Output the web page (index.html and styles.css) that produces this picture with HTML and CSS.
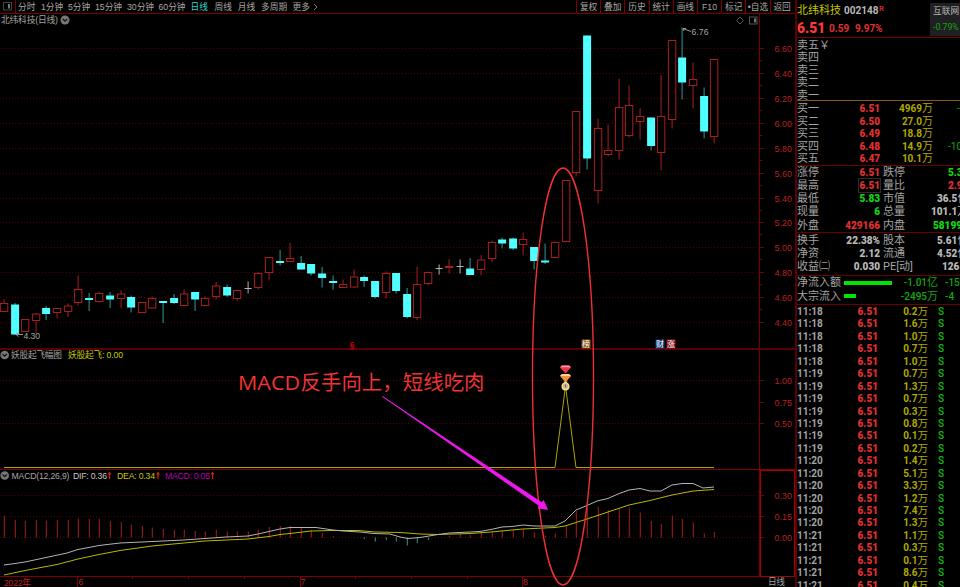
FILE: index.html
```html
<!DOCTYPE html>
<html lang="zh-CN">
<head>
<meta charset="utf-8">
<title>北纬科技 002148</title>
<link rel="stylesheet" href="styles.css">
</head>
<body>
<div class="app">
  <main class="left">
    <nav class="bar">
      <span class="dock"><svg width="9" height="9" viewBox="0 0 9 9"><rect x=".5" y=".5" width="8" height="7.5" fill="none" stroke="#444"/><rect x="5" y="2" width="2" height="4.5" fill="#777"/></svg></span>
      <div class="periods">
        <span class="p2">分时</span><span class="p3">1分钟</span><span class="p3">5分钟</span><span class="p4">15分钟</span><span class="p4b">30分钟</span><span class="p4">60分钟</span><span class="p2b on">日线</span><span class="p2c">周线</span><span class="p2c">月线</span><span class="p4b">多周期</span><span>更多<svg class="chev" width="5" height="8" viewBox="0 0 5 8"><path d="M1 1l3 3-3 3" fill="none" stroke="#999" stroke-width=".8"/></svg></span>
      </div>
      <div class="tools"><span>复权</span><span>叠加</span><span>历史</span><span>统计</span><span>画线</span><span>F10</span><span>标记</span><span>•自选</span><span>返回</span></div>
    </nav>
    <svg class="chart" width="795" height="573" viewBox="0 14 795 573">
      <g id="grid"></g>
      <g class="frame">
        <path d="M759.5 14V577"/>
        <path class="thick" d="M0 349H795"/>
        <path class="bright" d="M0 469.5H795M0 576.5H795"/>
        <path d="M77.5 577V587M300.5 577V587M522.5 577V587M132.5 577v2M188.5 577v2M244.5 577v2M355.5 577v2M411.5 577v2M467.5 577v2"/>
      </g>
      <rect class="axisbox" x="760.5" y="470.5" width="34" height="106"/>
      <g id="candles"></g>
      <g id="macd"></g>
      <polyline class="dea" points="4,575 25,570.5 57,564.5 78,559 99,554.5 120,550.5 152,546 184,543 205,541 248,539 269,536.5 280,534.5 290,533.5 311,531 333,530.5 358,530.5 375,532 400,532.5 420,534 438,534.5 470,533.5 491,532 512,530 523,529 544,528 555,527.5 565,526 587,519 608,512 629,505 650,500.5 672,495 693,491 714,489.5"/>
      <polyline class="dif" points="4,565 15,563.5 25,562 46,557.5 67,553 78,549.5 99,545.5 120,543 142,542 163,541 184,540 205,538.5 226,537 248,536 258,534 269,531.5 280,529 290,527.5 316,527.5 333,530 343,531 360,532 374,533.5 390,534 400,537 408,538.5 420,537.5 438,534.5 449,533 470,532 480,531.5 491,529.5 502,527 512,526.5 523,525 534,526 555,526 565,521 576,510 587,505.5 597,501 608,498.5 618,494 629,490 640,488.5 650,491 661,491 672,485 682,483.5 693,483.5 703,488 714,487"/>
      <polyline class="signal" points="4,467.5 555,467.5 565.5,386 576,467.5 714,467.5"/>

      <text class="t" x="1" y="23" textLength="57">北纬科技(日线)</text>
      <g class="knob"><circle cx="65" cy="20" r="4.5"/><path d="M62.8 19l2.2 2.2 2.2-2.2"/></g>
      <g class="knob"><circle cx="4.7" cy="355" r="4.3"/><path d="M2.5 354l2.2 2.2 2.2-2.2"/></g>
      <g class="knob"><circle cx="4.7" cy="475.5" r="4.3"/><path d="M2.5 474.5l2.2 2.2 2.2-2.2"/></g>
      <text class="t" x="11" y="358.3" textLength="51">妖股起飞幅图</text>
      <text class="t yel" x="68" y="358.3" textLength="55">妖股起飞: 0.00</text>
      <text class="t" x="11.5" y="478.6" textLength="58">MACD(12,26,9)</text>
      <text class="t lit" x="73" y="478.6" textLength="34">DIF: 0.36</text>
      <text class="t yel" x="117" y="478.6" textLength="38">DEA: 0.34</text>
      <text class="t mag" x="165" y="478.6" textLength="45">MACD: 0.05</text>
      <path class="up" d="M109.5 479v-6M158 479v-6M212.5 479v-6"/>
      <path class="uphead" d="M107.5 474.5l2-3 2 3zM156 474.5l2-3 2 3zM210.5 474.5l2-3 2 3z"/>

      <g class="corner"><path d="M740 17l3.500 3.500-3.500 3.500-3.500-3.500z"/><rect x="749.500" y="17" width="7.500" height="7"/><path class="fillbar" d="M754 18.500h2v4h-2z"/></g>
      <path class="leader" d="M683 28.500l8 3M683 28.500h3M683 28.500l1 2.500M16 334.500h7M16 334.500l2.500-2M16 334.500l2.500 2"/>
      <text class="t" x="691.5" y="35" textLength="17">6.76</text>
      <text class="t" x="23.500" y="339" textLength="16.500">4.30</text>
      <text class="para" x="349.500" y="348">§</text>
      <g class="badge">
        <rect x="581.500" y="339.500" width="9" height="9" fill="#8a5010"/><text x="582" y="347.200">榜</text>
        <rect x="655.500" y="339.500" width="9" height="9" fill="#123c78"/><text x="656" y="347.200">财</text>
        <rect x="666.500" y="339.500" width="9" height="9" fill="#8c1420"/><text x="667" y="347.200">涨</text>
      </g>
      <g>
        <path d="M560 367.500l2-2h7l2 2-5.500 6z" fill="#f03348"/><path d="M560 367.300l2-1.800h7l2 1.800z" fill="#ff9aa4"/>
        <path d="M560 376l2-2h7l2 2-5.500 6.500z" fill="#f09232"/><path d="M560 376l2-2h7l2 2z" fill="#ffd39a"/>
        <path d="M563.500 381.500h4l-1 2.500h-2z" fill="#e8c8b0"/><circle cx="565.500" cy="386.500" r="4" fill="#f3e27a"/><circle cx="565.500" cy="386" r="2.600" fill="#c8b4a8"/><path d="M565 384.500h1v3h-1z" fill="#806050"/>
      </g>
      <g class="date"><text x="4" y="585.500" textLength="27">2022年</text><text x="78.500" y="585">6</text><text x="300.500" y="585">7</text><text x="523" y="585">8</text></g>
      <text class="t" x="768" y="585.300" textLength="17">日线</text>

      <ellipse class="ring" cx="563" cy="376.500" rx="30.500" ry="208.500"/>
      <path class="arrow" d="M382.500 396.500L539.500 505.800L538 508L547.500 509.500L543.500 500.500L542 502.800Z"/>
      <text class="note" x="238" y="389.500" textLength="62" lengthAdjust="spacingAndGlyphs">MACD</text>
      <text class="note" x="300.500" y="389.500" textLength="184">反手向上，短线吃肉</text>
    </svg>
  </main>
  <aside class="quote">
    <header>
      <div>
        <div class="name"><b>北纬科技</b><i>002148</i><sup>R</sup></div>
        <div class="price"><b>6.51</b><span>0.59</span><span>9.97%</span></div>
      </div>
      <div class="sector"><span>互联网</span><em>-0.79%</em></div>
    </header>
    <section class="book asks"><p>卖五￥</p><p>卖四</p><p>卖三</p><p>卖二</p><p>卖一</p></section>
    <section class="book bids">
      <p><span>买一</span><b>6.51</b><i>4969<u>万</u></i><em class="s958">-</em></p>
      <p><span>买二</span><b>6.50</b><i>27.0<u>万</u></i></p>
      <p><span>买三</span><b>6.49</b><i>18.8<u>万</u></i></p>
      <p><span>买四</span><b>6.48</b><i>14.9<u>万</u></i><em>-10</em></p>
      <p><span>买五</span><b>6.47</b><i>10.1<u>万</u></i></p>
    </section>
    <section class="info">
      <p><span>涨停</span><b class="r">6.51</b><span>跌停</span><b class="g s948">5.3</b></p>
      <p><span>最高</span><b class="r boxed">6.51</b><span>量比</span><b class="r s948">2.9</b></p>
      <p><span>最低</span><b class="g">5.83</b><span>市值</span><b class="s937">36.5<u>亿</u></b></p>
      <p><span>现量</span><b class="g">6</b><span>总量</span><b class="s931">101.1<u>万</u></b></p>
      <p><span>外盘</span><b class="r">429166</b><span>内盘</span><b class="g s933">58199</b></p>
    </section>
    <section class="info fin">
      <p><span>换手</span><b>22.38%</b><span>股本</span><b class="s937">5.61<u>亿</u></b></p>
      <p><span>净资</span><b>2.12</b><span>流通</span><b class="s937">4.52<u>亿</u></b></p>
      <p><span>收益㈡</span><b>0.030</b><span>PE[动]</span><b class="s942">126.</b></p>
    </section>
    <section class="flow">
      <p><span>净流入额</span><s class="long"></s><b>-1.01<u>亿</u></b><b>-15</b></p>
      <p><span>大宗流入</span><s></s><b>-2495<u>万</u></b><b>-4</b></p>
    </section>
    <section class="ticks" id="ticks"></section>
  </aside>
</div>
<script src="app.js"></script>
</body>
</html>
```
FILE: styles.css
```css
* { box-sizing: border-box; }
body { margin: 0; background: #000; overflow: hidden; font-family: "Liberation Sans", "Noto Sans CJK SC", sans-serif; }
p { margin: 0; }
i, em { font-style: normal; }
u { text-decoration: none; font-weight: 400; font-size: 11px; }
.app { display: flex; width: 960px; height: 587px; overflow: hidden; }
.left { width: 795px; flex: none; display: flex; flex-direction: column; }

.bar { height: 14px; display: flex; border-bottom: 1px solid #780000; color: #a8a8a8; font-size: 8.7px; line-height: 14px; white-space: nowrap; }
.dock { width: 16px; padding: 2px 0 0 3px; border-right: 1px solid #780000; line-height: 0; }
.periods { flex: 1; display: flex; padding-left: 2px; }
.p2 { width: 23px; }
.p2b { width: 24px; }
.p2c { width: 23.3px; }
.p3 { width: 27px; }
.p4 { width: 32px; }
.p4b { width: 31.5px; }
.on { color: #2fd0d0; }
.chev { margin-left: 3px; vertical-align: -1px; }
.tools { display: flex; width: 219px; }
.tools span { width: 24.2px; border-left: 1px solid #780000; text-align: center; }

.chart { display: block; }
.chart text { font-family: "Liberation Sans", "Noto Sans CJK SC", sans-serif; }
.t { font-size: 8.7px; fill: #a4a4a4; }
.lit { fill: #c4c4c4; }
.yel { fill: #c8c800; }
.mag { fill: #b800b8; }
.grid { stroke: #520000; stroke-dasharray: 1 2; }
.tick { stroke: #780000; }
.chart .scale { font-size: 8.9px; fill: #b82020; }
.frame path { stroke: #780000; fill: none; }
.frame .thick { stroke: #5a0000; stroke-width: 2; }
.frame .bright { stroke: #800000; }
.axisbox { fill: none; stroke: #a80000; }
.rise { fill: #000; stroke: #a81e1e; }
.rise-wick { stroke: #a81e1e; }
.fall { fill: #50ffff; }
.fall-wick { stroke: #2c9c9c; }
.flat { stroke: #b4b4b4; }
.dif, .dea, .signal { fill: none; stroke-width: 1; }
.dif { stroke: #b4b4b4; }
.dea { stroke: #b8b800; }
.signal { stroke: #a8a800; }
.knob circle { fill: #777; }
.knob path { fill: none; stroke: #111; stroke-width: 1.2; }
.up { stroke: #e01c1c; stroke-width: 1.2; }
.uphead { fill: #e01c1c; }
.corner path, .corner rect { fill: none; stroke: #555; }
.corner .fillbar { fill: #777; stroke: none; }
.leader { stroke: #999; fill: none; }
.para { font-size: 9px; font-weight: bold; fill: #d00000; }
.badge text { font-size: 8px; fill: #fff; }
.date text { font-size: 8.7px; fill: #c02020; }
.ring { fill: none; stroke: #f03030; stroke-width: 1.4; }
.arrow { fill: #f018f0; stroke: #f018f0; stroke-width: .8; }
.chart .note { font-family: "Open Sans", "Noto Sans CJK SC", sans-serif; font-size: 20.4px; fill: #f03434; }

.quote { width: 165px; flex: none; border-left: 2px solid #5a0000; overflow: hidden; color: #a4a4a4; font-family: Roboto, "Noto Sans CJK SC", sans-serif; font-size: 10px; font-weight: bold; white-space: nowrap; }
.quote header { height: 38px; border-bottom: 1px solid #780000; display: flex; justify-content: space-between; }
.name { height: 20px; line-height: 21px; display: flex; }
.name b { width: 47px; color: #c8c800; font-size: 11px; font-weight: 400; }
.name i { width: 35px; color: #b8b8b8; }
.name sup { color: #d02828; font-size: 7.5px; line-height: 18px; }
.price { line-height: 17px; display: flex; color: #e03030; }
.price b { width: 32px; font-size: 13.8px; color: #ff3838; }
.price span { width: 26px; }
.sector { width: 30px; height: 33px; margin-top: 3px; background: #202022; padding-left: 3px; color: #b8b8b8; font-weight: 400; font-size: 8.7px; line-height: 16px; overflow: hidden; }
.sector span, .sector em { display: block; }
.sector em { color: #10a810; }
.book p, .info p, .flow p { display: flex; }
.quote p > * { flex: none; }
.book span, .asks p, .info span, .flow span { font-size: 11px; font-weight: 400; }
.asks { height: 63px; padding-top: 1px; border-bottom: 1px solid #8a5a10; }
.book p { height: 12.4px; line-height: 13px; }
.bids { height: 65px; padding-top: 1px; border-bottom: 1px solid #680000; }
.bids p { height: 12.5px; line-height: 14px; }
.bids span { width: 42px; }
.bids b { width: 41px; text-align: right; color: #e03030; }
.bids i { width: 53px; text-align: right; color: #b0a800; }
.bids em { color: #10a810; margin-left: 15px; font-weight: 400; }
.bids .s958 { margin-left: 24px; }
.info { height: 67px; border-bottom: 1px solid #680000; }
.info p { height: 13.15px; line-height: 14.4px; color: #b8b8b8; }
.info span { width: 43px; color: #a4a4a4; }
.info b { width: 40px; text-align: right; margin-right: 3px; }
.info .r { color: #e03030; }
.info .g { color: #10d810; }
.info .boxed { outline: 1px solid #2c2c2c; width: 21px; margin-left: 19px; }
.info b:last-child { text-align: left; margin: 0; width: auto; }
.info .s948 { padding-left: 22px; }
.info .s942 { padding-left: 16px; }
.info .s937 { padding-left: 11px; }
.info .s933 { padding-left: 7px; }
.info .s931 { padding-left: 5px; }
.fin { height: 43px; padding-top: 1px; }
.fin p { line-height: 13.4px; }
.flow { height: 29px; border-bottom: 1px solid #680000; color: #10a810; }
.flow p { height: 13.5px; line-height: 15px; align-items: center; }
.flow span { width: 47px; color: #a4a4a4; }
.flow s { width: 12px; height: 4px; background: #00e400; margin-right: 36px; }
.flow .long { width: 48px; margin-right: 0; }
.flow b { font-weight: 500; width: 46px; text-align: right; }
.flow b:last-child { text-align: left; margin-left: 7px; }
.ticks p { display: flex; height: 12.45px; line-height: 14.4px; }
.ticks span { width: 42px; }
.ticks b { width: 39px; text-align: right; color: #e03030; }
.ticks i { width: 50px; text-align: right; color: #b0a800; }
.ticks u { font-size: 10.5px; line-height: 1; }
.ticks em { color: #10b810; margin-left: 10px; font-weight: 500; }
```
FILE: app.js
```js
const make = (html, id) => { document.getElementById(id).innerHTML = html; };
const px = i => Math.round(4 + i * 10.6);

// Horizontal grid lines and axis labels
let grid = "";
const level = (y, label, line) => {
  if (line) grid += `<path class="grid" d="M0 ${y}H759"/>`;
  grid += `<path class="tick" d="M760 ${y}h4"/><text class="scale" x="774.5" y="${y + 3.2}" textLength="17.5">${label}</text>`;
};
for (let k = 0; k < 12; k++) {
  const y = Math.round(48 + k * 24.92) + 0.5;
  level(y, (6.6 - k * 0.2).toFixed(2), true);
  if (k < 11) grid += `<path class="tick" d="M760 ${y + 12}h2"/>`;
}
level(380.5, "1.00", true);
level(402.5, "0.75", false);
level(423.5, "0.50", true);
level(495.5, "0.30", true);
level(516.5, "0.15", true);
level(537.5, "0.00", true);
make(grid, "grid");

// kind (r rising, c falling, w flat), high, body top, body bottom, low
const bars = `r 299 303.5 311.5 311.5;c 303 304.5 334.5 335;r 319 319.5 331.5 332;r 313 314 320.5 332.5;c 306 308 314 320;r 308 308.5 312.5 318.5;r 303.5 306 311.5 317;r 275.5 289.5 302.5 305.5;c 293 298 300 311;r 291.5 293.5 301.5 302.5;c 292 295.5 299.5 308;r 290.5 294 298.5 308;c 295.5 297 307.5 312.5;r 302 302.5 312.5 313.5;r 296.5 298.5 308 308;c 301 301 303 323;c 294 298 303 304;r 289 294 305.5 305.5;c 292 292 299.5 311;r 296.5 298.5 305.5 305.5;r 282 286 296.5 299.5;c 284.5 287 295.5 297;r 289.5 290.5 298.5 301;w 281.5 288.5 288.5 293.5;r 272 273.5 287.5 289.5;r 257 257.5 272.5 280;c 250 261 263 265.5;r 243 258.5 261.5 262;c 256 263 269.5 269.5;c 264 264 273.5 275.5;c 267 273.5 278 287.5;c 275.5 281 283 289.5;r 279.5 284.5 287.5 287.5;r 269.5 277 287 287.5;c 275.5 277 281 287;c 281 281 297 298.5;r 271.5 273.5 292.5 298.5;c 273 273 291 293.5;c 288 294 317 318.5;r 266.5 284.5 317.5 320;r 271.5 272.5 283.5 285.5;w 264.5 268.5 268.5 274.5;r 259 266.5 267.5 273.5;w 259.5 266.5 266.5 273.5;c 258 268.5 275 275;r 255 260 269.5 275.5;r 240.5 242.5 258.5 262;c 237.5 239.5 243.5 248.5;c 237.5 238.5 248.5 250;r 232.5 239.5 244.5 255.5;c 247 247 261 269.5;c 243.5 260.5 262.5 264;r 241.5 242.5 257.5 257.5;r 180 180.5 241.5 241.5;r 111 111.5 172.5 176.5;c 35.5 35.5 158.5 169.5;r 118.5 128.5 190.5 203.5;r 124.5 150.5 154.5 156;r 78.5 107.5 150.5 159.5;r 85.5 105.5 135.5 137.5;r 108 116.5 121.5 139.5;c 117.5 117.5 146 150.5;r 75 116.5 152.5 170.5;r 40.5 40.5 119.5 128.5;c 27.5 57.5 82.5 99.5;r 62.5 79.5 85.5 108.5;c 87.5 96 131.5 138.5;r 59.5 59.5 136.5 143.5`
  .split(";").map(s => s.split(" "));
make(bars.map(([kind, ...v], i) => {
  const [hi, top, bot, low] = v.map(Number);
  const x = px(i) + 0.1;
  if (kind === "w") return `<path class="flat" d="M${x} ${hi}V${low}M${x - 3.5} ${top}h7"/>`;
  if (kind === "c") return `<path class="fall-wick" d="M${x} ${hi}V${low}"/><rect class="fall" x="${x - 4}" y="${top}" width="8" height="${bot - top}"/>`;
  return `<path class="rise-wick" d="M${x} ${hi}V${top}M${x} ${bot}V${low}"/><rect class="rise" x="${x - 3.7}" y="${top}" width="7.4" height="${bot - top}"/>`;
}).join(""), "candles");

// MACD histogram: bar ends, measured against the zero line
const zero = 537.5;
const hist = [515.7, 520, 520.5, 520, 520.5, 520, 520, 518.5, 519, 519, 521, 522, 524.5, 526, 527.5, 529, 530, 530, 531, 531.5, 530, 531.5, 531.5, 531.5, 529.5, 527, 526, 526, 527.5, 530, 533, 536, 0, 0, 539, 541.5, 540, 541.5, 545.5, 543, 540, 0, 536, 534, 535, 533, 531, 530, 530, 529.5, 532.5, 535.5, 533.5, 526, 511, 508, 506.5, 510, 508.5, 507.5, 512.5, 521, 524, 515.5, 519, 522.5, 533.5, 532];
make(hist.map((y, i) => y ? `<path class="${y > zero ? "fall-wick" : "rise-wick"}" d="M${px(i) + 0.3} ${zero}V${y}"/>` : "").join(""), "macd");

// Trade ticks
const trades = { "11:18": [0.2, 1.6, 1.0, 0.7, 1.0], "11:19": [0.7, 1.3, 0.7, 0.3, 0.8, 0.1, 0.2], "11:20": [1.4, 5.1, 3.3, 1.2, 7.4, 1.3], "11:21": [1.1, 0.3, 0.1, 8.6, 0.4] };
make(Object.entries(trades).flatMap(([time, vols]) => vols.map(v =>
  `<p><span>${time}</span><b>6.51</b><i>${v.toFixed(1)}<u>万</u></i><em>S</em></p>`)).join(""), "ticks");
```
